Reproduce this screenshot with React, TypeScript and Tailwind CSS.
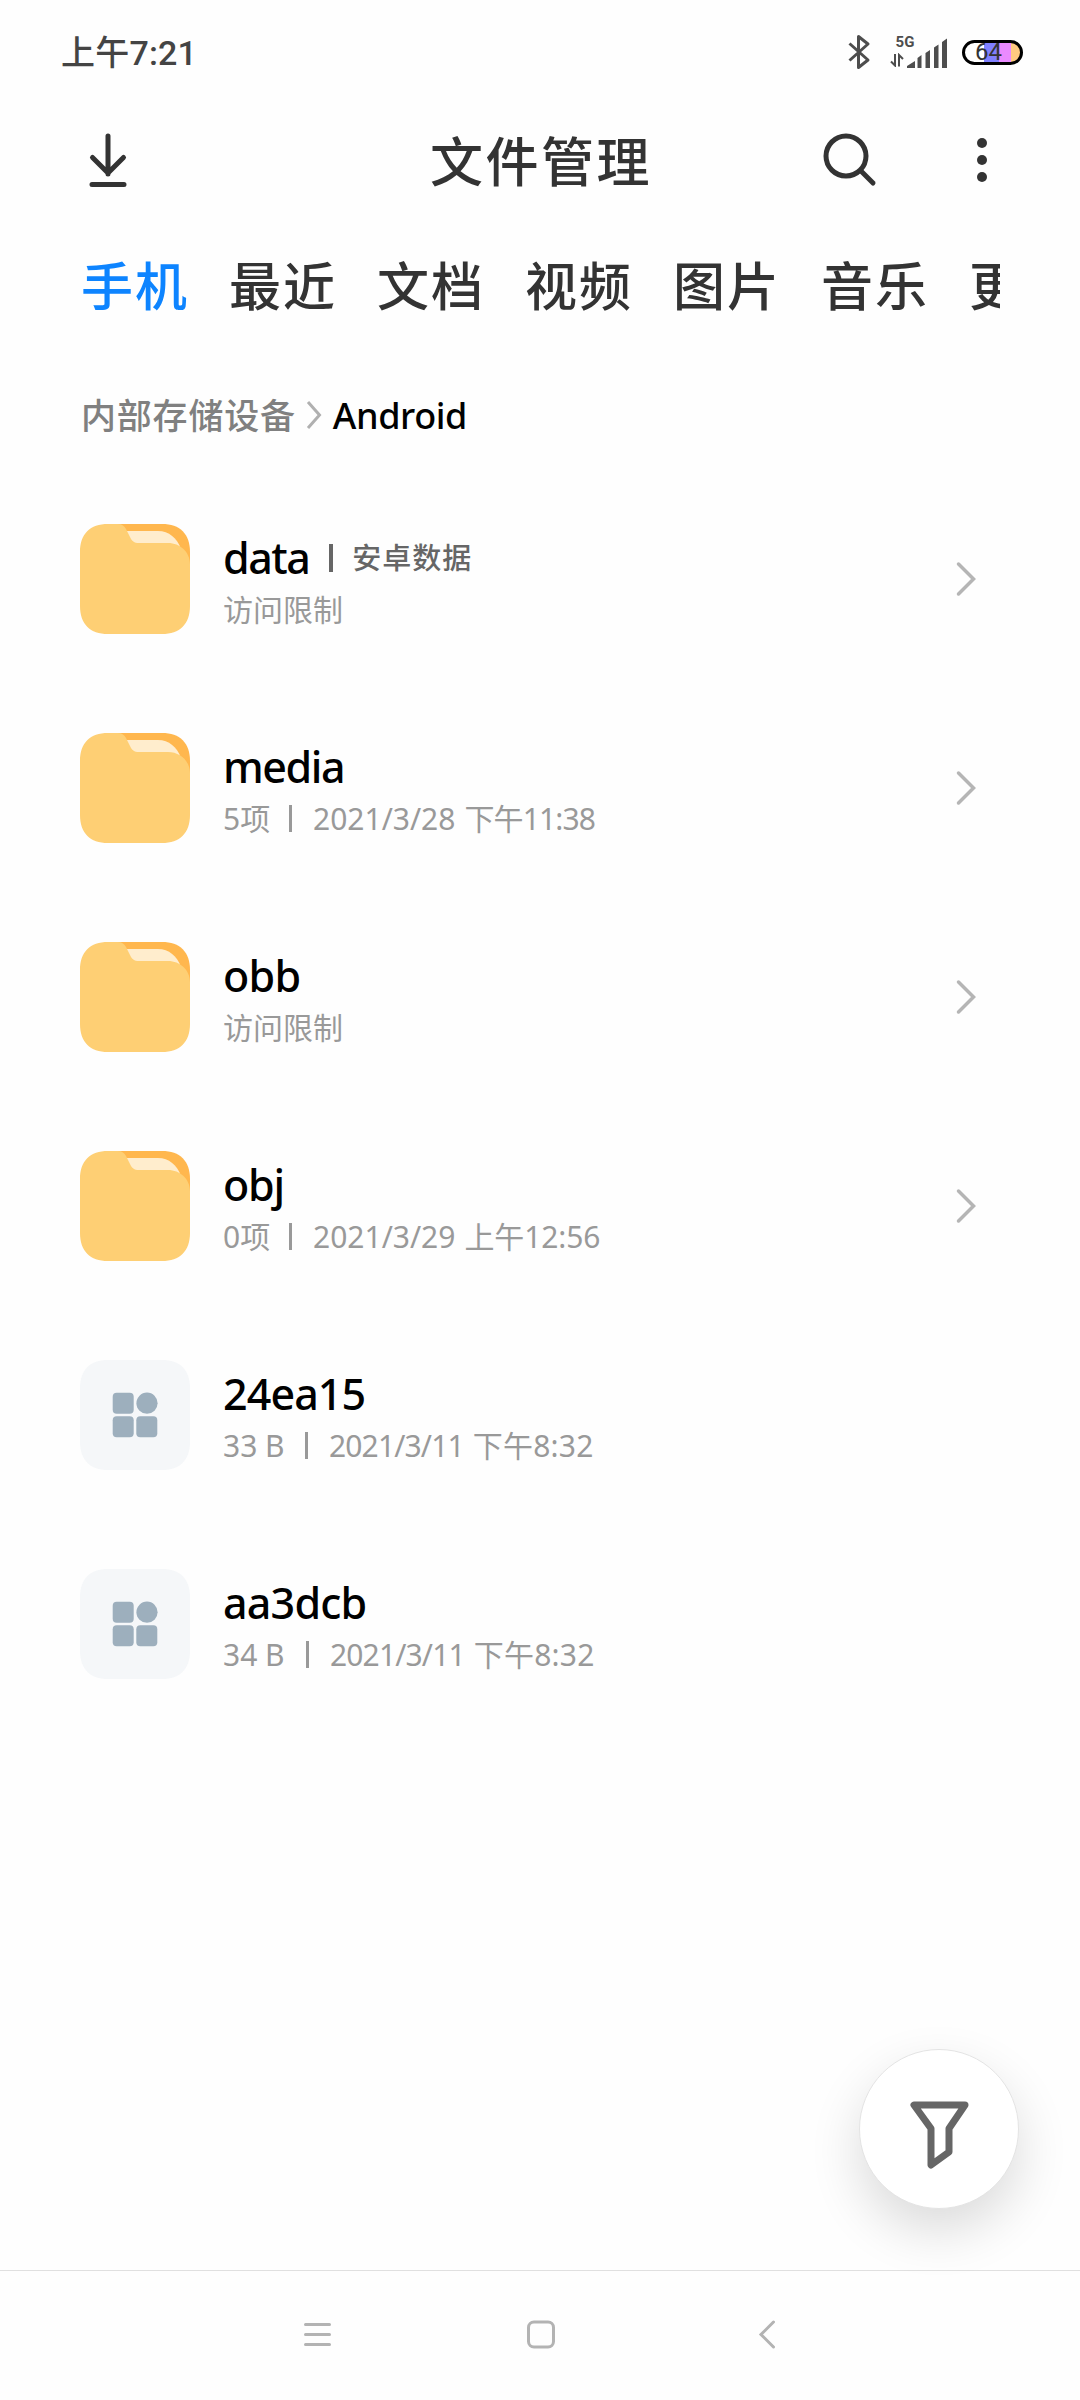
import { useState } from 'react';
import clsx from 'clsx';

type Entry = {
  name: string;
  kind: 'folder' | 'file';
  nameClass: string;
  tag?: string;
  info: string;
  infoClass: string;
  date?: string;
  dateClass?: string;
  time?: string;
  timeClass?: string;
};

const TABS = ['手机', '最近', '文档', '视频', '图片', '音乐', '更多'];

const ENTRIES: Entry[] = [
  { name: 'data', kind: 'folder', nameClass: 'tracking-[-1.5px]', tag: '安卓数据', info: '访问限制', infoClass: '' },
  { name: 'media', kind: 'folder', nameClass: 'tracking-[-1.4px]', info: '5项', infoClass: 'w-[45px]', date: '2021/3/28', time: '下午11:38', timeClass: 'tracking-[-0.85px]' },
  { name: 'obb', kind: 'folder', nameClass: 'tracking-[-0.7px]', info: '访问限制', infoClass: '' },
  { name: 'obj', kind: 'folder', nameClass: 'tracking-[-1.2px]', info: '0项', infoClass: 'w-[45px]', date: '2021/3/29', time: '上午12:56', timeClass: 'tracking-[-0.1px]' },
  { name: '24ea15', kind: 'file', nameClass: 'tracking-[-0.9px]', info: '33 B', infoClass: 'w-[61px]', date: '2021/3/11', dateClass: 'tracking-[-0.85px]', time: '下午8:32', timeClass: 'tracking-[0.2px]' },
  { name: 'aa3dcb', kind: 'file', nameClass: 'tracking-[-0.8px]', info: '34 B', infoClass: 'w-[62px]', date: '2021/3/11', dateClass: 'tracking-[-0.85px]', time: '下午8:32', timeClass: 'tracking-[0.2px]' },
];

function StatusBar() {
  return (
    <div className="flex h-[104px] items-center pl-[61px] pr-[57px]">
      <span className="pt-[2px] font-['Roboto','Noto_Sans_CJK_SC',sans-serif] text-[34px] font-medium leading-[40px] tracking-[0.2px] text-[#444]">上午7:21</span>
      <div className="ml-auto flex items-center">
        <svg width="26" height="36" viewBox="0 0 26 36" fill="none" stroke="#4d4d4d" strokeWidth="3">
          <path d="M2.500 9.500 21 26 11.500 33.500V2.500L21 10 2.500 26.500" strokeLinejoin="round" />
        </svg>
        <div className="ml-[17px] flex h-[36px] w-[58px] items-end justify-end">
          <div className="flex h-full w-[30px] flex-col items-center">
            <span className="-mr-[2px] font-['Roboto',sans-serif] text-[15px] font-bold leading-[16px] text-[#4d4d4d]">5G</span>
            <svg className="mr-auto mt-[3px]" width="14" height="14" viewBox="0 0 14 14" fill="none" stroke="#4d4d4d" strokeWidth="2">
              <path d="M5 1v11.500L1 8.500M9 13.500V2l4 4" />
            </svg>
          </div>
          <svg className="-ml-[12px] mb-[1px] shrink-0" width="42" height="31" viewBox="0 0 42 31" fill="#4d4d4d">
            <path d="M1 30v-2l8-5v7zM11.500 30V20l4-3v13zM19.500 30V15l4.500-3v18zM28 30V9.500l4.500-3V30zM36 30V4l5-3.500V30z" />
          </svg>
        </div>
        <div className="ml-[14px] flex h-[25px] w-[61px] items-center justify-center rounded-full border-[3px] border-black bg-[linear-gradient(90deg,#fff_36%,#8080ff_36%,#8080ff_60%,#ea8aff_60%,#ea8aff_80%,#ffca80_80%)] bg-origin-border">
          <span className="-ml-[8px] font-['Roboto',sans-serif] text-[24px] leading-[20px] text-[#333]">64</span>
        </div>
      </div>
    </div>
  );
}

function Header() {
  return (
    <header className="grid h-[112px] grid-cols-[1fr_auto_1fr] items-center px-[80px]">
      <svg width="56" height="56" viewBox="80 132 56 56" fill="none" stroke="#333" strokeWidth="5" strokeLinecap="round" strokeLinejoin="round">
        <path d="M108 136v38M92.500 157.500 108 173l15.500-15.500M92 184.500h32" />
      </svg>
      <h1 className="pl-[2px] pt-[3px] text-[53px] font-medium leading-[60px] tracking-[2.5px] text-[#333]">文件管理</h1>
      <div className="flex items-center justify-end gap-[94px]">
        <svg width="56" height="56" viewBox="822 132 56 56" fill="none" stroke="#333" strokeWidth="5" strokeLinecap="round">
          <circle cx="846" cy="156" r="20" />
          <path d="m861 171 12 12" />
        </svg>
        <svg className="mr-[8px]" width="20" height="56" viewBox="0 0 20 56" fill="#333">
          <circle cx="10" cy="11" r="5" />
          <circle cx="10" cy="28" r="5" />
          <circle cx="10" cy="45" r="5" />
        </svg>
      </div>
    </header>
  );
}

function FolderIcon() {
  return (
    <svg className="shrink-0" width="110" height="110" viewBox="0 0 110 110">
      <path d="M28 0h54c18 0 28 10 28 28v54H28z" fill="#ffb74e" />
      <path d="M44 7h34c11 0 19 7 23 18v12H50z" fill="#ffedcd" />
      <path d="M28 0h10c4 0 6.500 2 8 5l4 8c2 4 4 6 9 6h29c12 0 22 9 22 21v42c0 18-10 28-28 28H28C10 110 0 100 0 82V28C0 10 10 0 28 0z" fill="#fecf74" />
    </svg>
  );
}

function FileIcon() {
  return (
    <svg className="shrink-0" width="110" height="110" viewBox="0 0 110 110">
      <path d="M28 0h54c18 0 28 10 28 28v54c0 18-10 28-28 28H28C10 110 0 100 0 82V28C0 10 10 0 28 0z" fill="#f5f7f9" />
      <g fill="#9dafbd">
        <rect x="32.700" y="32.700" width="21" height="21" rx="4" />
        <circle cx="67" cy="43.200" r="10.600" />
        <rect x="32.700" y="56.200" width="21" height="21" rx="4" />
        <rect x="56.300" y="56.200" width="21" height="21" rx="4" />
      </g>
    </svg>
  );
}

function EntryRow({ entry }: { entry: Entry }) {
  return (
    <li className="flex h-[209px] items-center pl-[80px] pr-[104px]">
      {entry.kind === 'folder' ? <FolderIcon /> : <FileIcon />}
      <div className="ml-[33px] flex flex-col whitespace-nowrap pt-[8px]">
        <div className="flex h-[54px] items-center">
          <span className={clsx('text-[43px] font-medium leading-[54px] text-black', entry.nameClass)}>{entry.name}</span>
          {entry.tag && (
            <>
              <span className="ml-[20px] h-[28px] w-[4px] bg-[#666]" />
              <span className="ml-[19px] text-[29px] font-medium leading-[40px] tracking-[1px] text-[#666]">{entry.tag}</span>
            </>
          )}
        </div>
        <div className="flex h-[50px] items-center text-[30px] leading-[48px] text-[#999]">
          <span className={entry.infoClass}>{entry.info}</span>
          {entry.date && (
            <>
              <span className="ml-[21px] h-[27px] w-[3px] bg-[#999]" />
              <span className={clsx('ml-[21px]', entry.dateClass)}>{entry.date}</span>
              <span className={clsx('ml-[9px]', entry.timeClass)}>{entry.time}</span>
            </>
          )}
        </div>
      </div>
      {entry.kind === 'folder' && (
        <svg className="ml-auto" width="20" height="36" viewBox="0 0 20 36" fill="none" stroke="#b5b5b5" strokeWidth="3.500" strokeLinecap="round">
          <path d="m2.500 3 15 15-15 15" />
        </svg>
      )}
    </li>
  );
}

export default function App() {
  const [activeTab, setActiveTab] = useState('手机');

  return (
    <div className="relative flex h-[2400px] w-[1080px] flex-col overflow-hidden bg-[#fefefe] font-['Noto_Sans','Noto_Sans_CJK_SC',sans-serif]">
      <StatusBar />
      <Header />

      <nav className="mx-[80px] flex h-[140px] items-center gap-[40px] overflow-hidden pl-[1px]">
        {TABS.map((tab) => (
          <button
            key={tab}
            onClick={() => setActiveTab(tab)}
            className={clsx(
              'shrink-0 whitespace-nowrap text-[52px] font-medium leading-[60px] tracking-[2px]',
              tab === activeTab ? 'text-[#0d84ff]' : 'text-[#333]'
            )}
          >
            {tab}
          </button>
        ))}
      </nav>

      {/* Breadcrumb */}
      <div className="flex h-[118px] items-center pl-[81px] pt-[1px]">
        <span className="text-[35px] font-medium leading-[50px] tracking-[0.8px] text-[#808080]">内部存储设备</span>
        <svg className="ml-[9px]" width="18" height="32" viewBox="0 0 18 32" fill="none" stroke="#b0b0b0" strokeWidth="3">
          <path d="m3 2 11.500 13L3 28" />
        </svg>
        <span className="ml-[10px] text-[36px] font-medium leading-[50px] tracking-[-0.4px] text-black">Android</span>
      </div>

      <ul className="flex flex-col">
        {ENTRIES.map((entry) => (
          <EntryRow key={entry.name} entry={entry} />
        ))}
      </ul>

      {/* Filter button floats above the list */}
      <button className="absolute left-[859px] top-[2049px] flex h-[160px] w-[160px] items-center justify-center rounded-full border border-[#e4e4e4] bg-white shadow-[0_22px_52px_rgba(0,0,0,0.14)]">
        <svg width="70" height="76" viewBox="904 2091 70 76" fill="none" stroke="#666" strokeWidth="7" strokeLinecap="round" strokeLinejoin="round" overflow="visible">
          <path d="M914 2105h51l-16 23.500v23.500l-18 13v-36.500z" />
        </svg>
      </button>

      {/* System navigation */}
      <footer className="mt-auto flex h-[130px] items-center border-t border-[#e0e0e0] pb-[1px]">
        <svg className="ml-[302px]" width="32" height="32" viewBox="0 0 32 32" fill="none" stroke="#b3b3b3" strokeWidth="3" strokeLinecap="round">
          <path d="M3.500 5.500h24M3.500 15.500h24M3.500 25.500h24" />
        </svg>
        <svg className="ml-[191px]" width="32" height="32" viewBox="0 0 32 32" fill="none" stroke="#b3b3b3" strokeWidth="3">
          <rect x="3.500" y="3" width="25" height="25" rx="5.500" />
        </svg>
        <svg className="ml-[200px]" width="20" height="32" viewBox="0 0 20 32" fill="none" stroke="#b3b3b3" strokeWidth="3" strokeLinecap="round">
          <path d="M16.500 3 4 15.500 16.500 28" />
        </svg>
      </footer>
    </div>
  );
}
